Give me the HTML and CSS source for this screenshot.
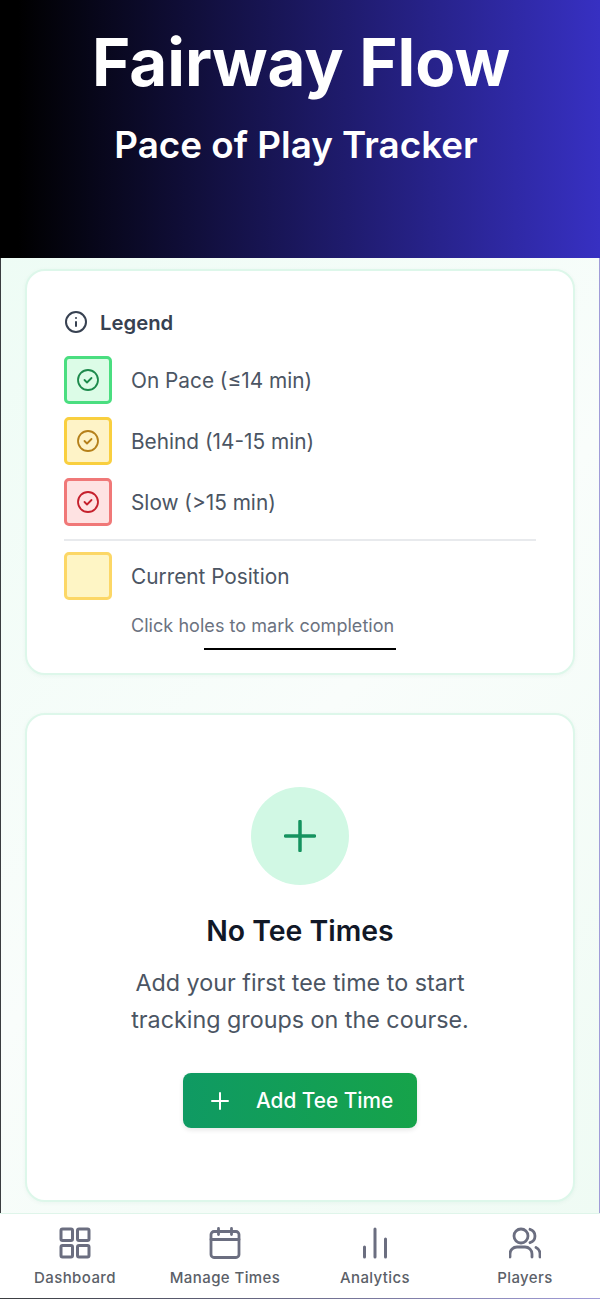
FILE: index.html
```html
<!DOCTYPE html>
<html lang="en">
<head>
<meta charset="utf-8">
<title>Fairway Flow</title>
<link rel="stylesheet" href="styles.css">
</head>
<body>
<div class="app">
  <header class="hero">
    <h1 class="hero-title">Fairway Flow</h1>
    <p class="hero-sub">Pace of Play Tracker</p>
  </header>
  <main class="main">
    <section class="card legend">
      <div class="legend-head">
        <svg class="info-icon" viewBox="0 0 24 24" fill="none" stroke="currentColor" stroke-width="2" stroke-linecap="round"><circle cx="12" cy="12" r="10"/><path d="M12 16v-4M12 8h.01"/></svg>
        <span>Legend</span>
      </div>
      <div class="legend-row">
        <span class="swatch swatch-green"><svg class="check" viewBox="0 0 24 24" fill="none" stroke="currentColor" stroke-width="1.8" stroke-linecap="round" stroke-linejoin="round"><circle cx="12" cy="12" r="10"/><path d="m8.5 12 2.5 2.5 4.5-4.5"/></svg></span>
        <span>On Pace (≤14 min)</span>
      </div>
      <div class="legend-row">
        <span class="swatch swatch-yellow"><svg class="check" viewBox="0 0 24 24" fill="none" stroke="currentColor" stroke-width="1.8" stroke-linecap="round" stroke-linejoin="round"><circle cx="12" cy="12" r="10"/><path d="m8.5 12 2.5 2.5 4.5-4.5"/></svg></span>
        <span>Behind (14-15 min)</span>
      </div>
      <div class="legend-row">
        <span class="swatch swatch-red"><svg class="check" viewBox="0 0 24 24" fill="none" stroke="currentColor" stroke-width="1.8" stroke-linecap="round" stroke-linejoin="round"><circle cx="12" cy="12" r="10"/><path d="m8.5 12 2.5 2.5 4.5-4.5"/></svg></span>
        <span>Slow (&gt;15 min)</span>
      </div>
      <div class="legend-current">
        <div class="legend-row">
          <span class="swatch swatch-current"></span>
          <span>Current Position</span>
        </div>
        <p class="legend-note">Click holes to mark completion</p>
        <div class="legend-mark"></div>
      </div>
    </section>
    <section class="card empty">
      <div class="empty-circle">
        <svg class="empty-plus" viewBox="0 0 32 32" fill="none" stroke="currentColor" stroke-width="3.5" stroke-linecap="round"><path d="M1.5 16h29M16 1.5v29"/></svg>
      </div>
      <h2 class="empty-title">No Tee Times</h2>
      <p class="empty-text">Add your first tee time to start<br>tracking groups on the course.</p>
      <button class="add-btn" type="button">
        <svg class="btn-plus" viewBox="0 0 24 24" fill="none" stroke="currentColor" stroke-width="2" stroke-linecap="round"><path d="M4 12h16M12 4v16"/></svg>
        <span>Add Tee Time</span>
      </button>
    </section>
  </main>
  <nav class="tabbar">
    <a class="tab">
      <svg class="tab-icon" viewBox="0 0 32 32" fill="none" stroke="currentColor" stroke-width="3" stroke-linejoin="round"><rect x="2" y="2" width="11.5" height="11.5" rx="1.5"/><rect x="18.5" y="2" width="11.5" height="11.5" rx="1.5"/><rect x="2" y="18.5" width="11.5" height="11.5" rx="1.5"/><rect x="18.5" y="18.5" width="11.5" height="11.5" rx="1.5"/></svg>
      <span>Dashboard</span>
    </a>
    <a class="tab">
      <svg class="tab-icon" viewBox="0 0 32 32" fill="none" stroke="currentColor" stroke-width="2.8" stroke-linecap="round" stroke-linejoin="round"><rect x="2" y="4.5" width="28" height="26" rx="3"/><path d="M2 12.5h28M9.5 1.5v6M22.5 1.5v6"/></svg>
      <span>Manage Times</span>
    </a>
    <a class="tab">
      <svg class="tab-icon" viewBox="0 0 32 32" fill="none" stroke="currentColor" stroke-width="3" stroke-linecap="round"><path d="M16 2v28M26.5 12v18M5.5 20v10"/></svg>
      <span>Analytics</span>
    </a>
    <a class="tab">
      <svg class="tab-icon" viewBox="0 0 32 32" fill="none" stroke="currentColor" stroke-width="2.8" stroke-linecap="round" stroke-linejoin="round"><circle cx="12" cy="9" r="7"/><path d="M1 30v-3a7 7 0 0 1 7-7h8a7 7 0 0 1 7 7v3M21 2.3a7 7 0 0 1 0 13.4M27 20.4a7 7 0 0 1 4 6.3V30"/></svg>
      <span>Players</span>
    </a>
  </nav>
</div>
</body>
</html>
```
FILE: styles.css
```css
* { box-sizing: border-box; }
html, body { margin: 0; padding: 0; }
body { font-family: Inter, "Liberation Sans", sans-serif; background: #fff; }
.app { width: 600px; height: 1299px; display: flex; flex-direction: column; overflow: hidden; padding: 0 1px 1px; background: linear-gradient(90deg, #3a3d40, #a19dd8); }
.hero { flex: 0 0 258px; margin: 0 -1px; background: linear-gradient(90deg, #000 3%, #3730c2 100%); color: #fff; text-align: center; padding-top: 25px; }
.hero-title { margin: 0 0 0 2px; font-weight: 700; font-size: 65.4px; line-height: 76px; }
.hero-sub { margin: 21px 8px 0 0; font-weight: 600; font-size: 36.8px; line-height: 46px; }
.main { flex: 1; background: linear-gradient(135deg, #eefcf5, #f9fdfb 50%, #effbf4); padding: 11px 24px 0; display: flex; flex-direction: column; gap: 38px; }
.card { background: #fff; border: 2px solid #ddf7ea; border-radius: 20px; box-shadow: 0 1px 4px rgba(16, 120, 80, 0.05); }
.legend { height: 406px; padding: 38px 37px 0; flex: none; }
.legend-head { display: flex; align-items: center; gap: 12px; font-size: 20.3px; font-weight: 600; color: #374151; height: 26px; margin-bottom: 21px; }
.info-icon { width: 24px; height: 24px; color: #374151; }
.legend-row { display: flex; align-items: center; gap: 19px; font-size: 20.8px; color: #4b5563; margin-bottom: 13px; }
.swatch { width: 48px; height: 48px; flex: none; border: 3px solid; border-radius: 5px; display: flex; align-items: center; justify-content: center; }
.check { width: 24px; height: 24px; }
.swatch-green { background: #dcfce7; border-color: #4ade80; color: #1d8a4c; }
.swatch-yellow { background: #fef3c7; border-color: #f9cf3f; color: #b5801a; }
.swatch-red { background: #fee2e2; border-color: #f07878; color: #c5202c; }
.swatch-current { background: #fef5c5; border-color: #fcd766; }
.legend-current { border-top: 2px solid #e8eaed; padding-top: 11px; }
.legend-current .legend-row { margin-bottom: 13px; }
.legend-note { margin: 0 0 0 67px; font-size: 18px; line-height: 26px; letter-spacing: 0.05px; color: #6b7280; }
.legend-mark { width: 192px; height: 2px; background: #000; margin: 9px 0 0 140px; }
.empty { height: 489px; flex: none; display: flex; flex-direction: column; align-items: center; padding-top: 72px; }
.empty-circle { width: 98px; height: 98px; border-radius: 50%; background: #d1f8e4; display: flex; align-items: center; justify-content: center; color: #15935f; }
.empty-plus { width: 32px; height: 32px; }
.empty-title { margin: 28px 0 0; font-size: 28.4px; line-height: 36px; font-weight: 600; color: #111827; }
.empty-text { margin: 15px 0 0; font-size: 23.3px; line-height: 37px; color: #4b5563; text-align: center; }
.add-btn { margin-top: 35px; width: 234px; height: 55px; border: 0; border-radius: 8px; background: linear-gradient(90deg, #0f9a63, #16a34a); color: #fff; font-family: inherit; font-size: 20.8px; font-weight: 500; display: flex; align-items: center; gap: 24px; padding: 0 0 0 25px; box-shadow: 0 2px 5px rgba(0, 0, 0, 0.1); }
.btn-plus { width: 24px; height: 24px; flex: none; }
.tabbar { flex: 0 0 85px; background: #fff; border-top: 1px solid #dff5ea; display: grid; grid-template-columns: repeat(4, 150px); margin: 0 -1px; }
.tab { display: flex; flex-direction: column; align-items: center; padding-top: 13px; color: #6b7280; font-size: 15px; font-weight: 500; gap: 9px; }
.tab-icon { width: 32px; height: 32px; color: #6b6e80; }
.tab span { color: #5b6068; line-height: 20px; letter-spacing: 0.4px; }
```
